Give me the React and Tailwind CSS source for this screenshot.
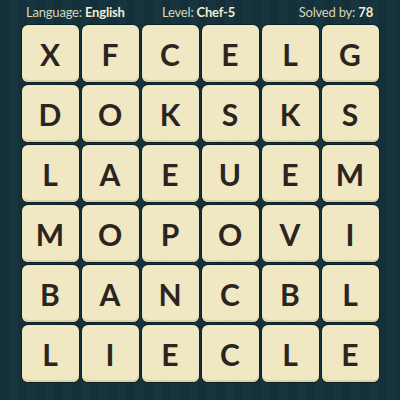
const rows = [
  ["X", "F", "C", "E", "L", "G"],
  ["D", "O", "K", "S", "K", "S"],
  ["L", "A", "E", "U", "E", "M"],
  ["M", "O", "P", "O", "V", "I"],
  ["B", "A", "N", "C", "B", "L"],
  ["L", "I", "E", "C", "L", "E"],
];

function Tile({ letter }) {
  return (
    <div className="h-[57px] rounded-[6px] bg-[#f0e7c3] shadow-[inset_0_-2px_0_#ddd2a6,0_0_0_1px_#0c2229] flex items-center justify-center">
      <span className="text-[30px] font-bold text-[#2b241f] leading-none">
        {letter}
      </span>
    </div>
  );
}

export default function App() {
  return (
    <div className="w-[400px] h-[400px] overflow-hidden font-['Lato',sans-serif] bg-[#14303a] bg-[repeating-linear-gradient(90deg,#14303a_0px,#14303a_9px,#16353f_9px,#16353f_18px)]">
      <div className="h-[25px] flex items-center pl-[26px] pr-[27px] text-[13px] text-[#d9d5b6] tracking-[-0.2px]">
        <span className="w-[136px]">
          Language: <b className="text-[#f2ecd0]">English</b>
        </span>
        <span>
          Level: <b className="text-[#f2ecd0]">Chef-5</b>
        </span>
        <span className="ml-auto">
          Solved by: <b className="text-[#f2ecd0]">78</b>
        </span>
      </div>
      <div className="w-[357px] mx-auto grid grid-cols-6 gap-[3px]">
        {rows.flat().map((l, i) => (
          <Tile key={i} letter={l} />
        ))}
      </div>
    </div>
  );
}
